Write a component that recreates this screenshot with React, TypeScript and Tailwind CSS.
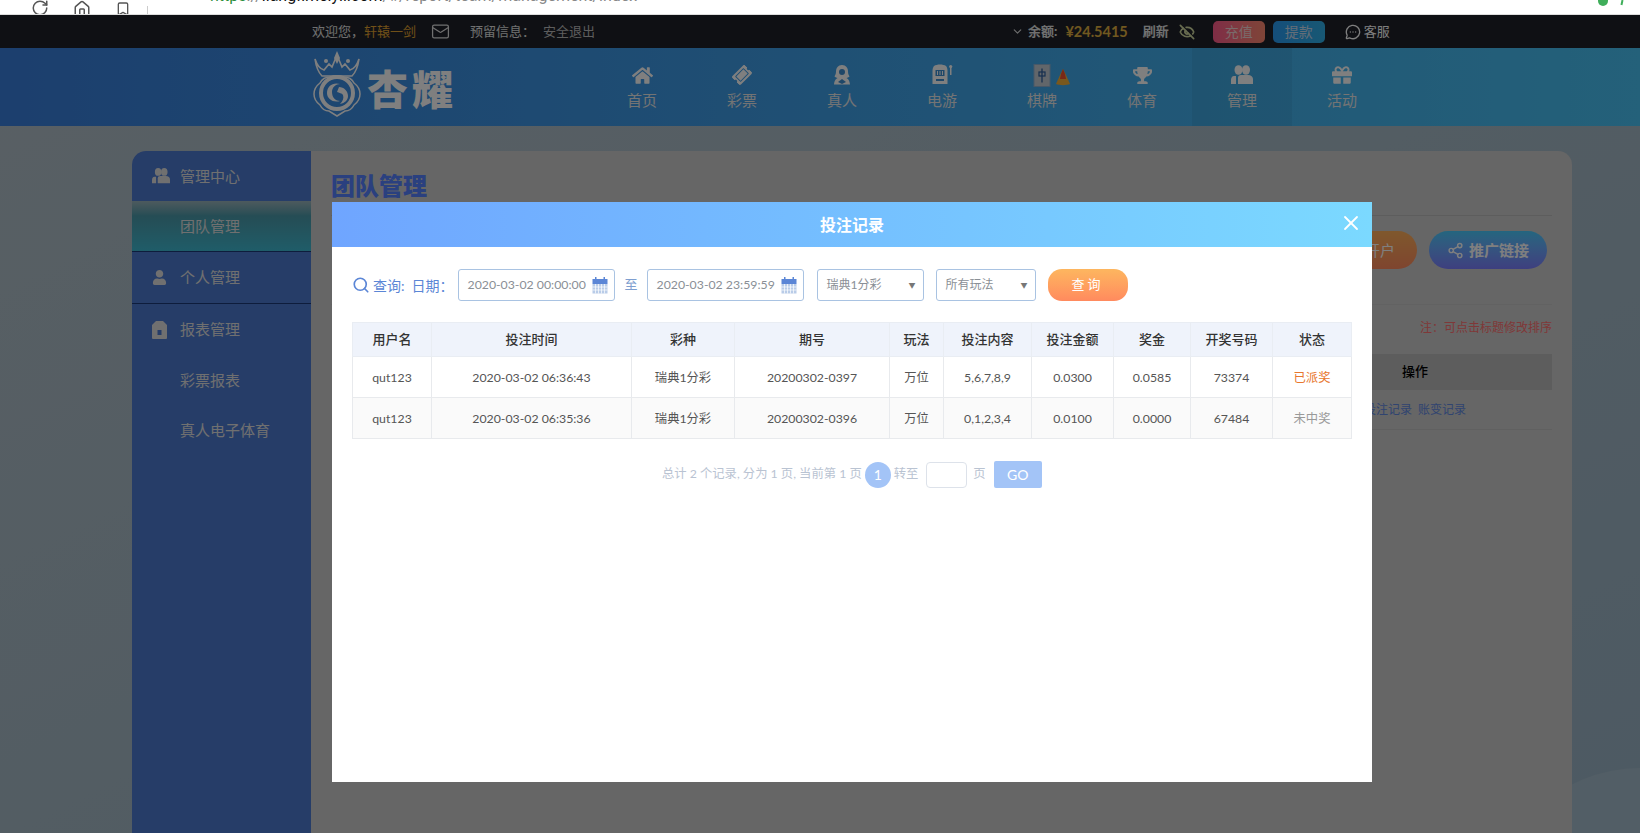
import { FaHome, FaTicketAlt, FaTrophy, FaGift, FaUser } from "react-icons/fa";
import { Mail, ChevronDown, EyeOff, MessageCircleMore, Share2, X, Search, RotateCw, House, Bookmark } from "lucide-react";

const font = "font-['Lato','Noto_Sans_CJK_SC',sans-serif]";

const rows = [
  ["qut123", "2020-03-02 06:36:43", "瑞典1分彩", "20200302-0397", "万位", "5,6,7,8,9", "0.0300", "0.0585", "73374", "已派奖"],
  ["qut123", "2020-03-02 06:35:36", "瑞典1分彩", "20200302-0396", "万位", "0,1,2,3,4", "0.0100", "0.0000", "67484", "未中奖"],
];

const heads = ["用户名", "投注时间", "彩种", "期号", "玩法", "投注内容", "投注金额", "奖金", "开奖号码", "状态"];

function PeopleIcon({ size }: { size: number }) {
  return (
    <svg width={size} height={size} viewBox="0 0 22 22" fill="currentColor">
      <ellipse cx="7.500" cy="6" rx="4" ry="4.800" />
      <ellipse cx="15" cy="6" rx="4" ry="4.800" />
      <path d="M0 20v-4c0-2 1-4 3-4h2v8z" />
      <path d="M7 20v-6c0-2 1-3 3-3h7c3 0 5 2 5 4v5z" />
    </svg>
  );
}

function LiveIcon() {
  return (
    <svg width="22" height="22" viewBox="0 0 22 22" fill="currentColor">
      <path d="M11 1c-4 0-6 3-6 6.500 0 2-.6 3.500-1.500 5 1 .8 2 1.300 3 1.500-1.500 1-3 2.200-3.500 6.500h16c-.5-4.300-2-5.500-3.500-6.500 1-.2 2-.7 3-1.500-.9-1.500-1.500-3-1.500-5C17 4 15 1 11 1z" />
      <circle cx="11" cy="8" r="3" fill="#3f8fd0" />
      <path d="M7 18l4-3 4 3-4 2z" fill="#3f8fd0" />
    </svg>
  );
}

function SlotIcon() {
  return (
    <svg width="24" height="22" viewBox="0 0 24 22" fill="currentColor">
      <path d="M4 2c3-2 9-2 12 0 1 1 1.500 3 1.500 5v13h-15V7c0-2 .5-4 1.500-5z" />
      <rect x="5.500" y="6" width="9" height="6" fill="#3f8fd0" />
      <path d="M7.500 7v4M10 7v4M12.500 7v4" stroke="currentColor" />
      <rect x="6" y="15" width="8" height="2" fill="#3f8fd0" />
      <path d="M20 3h1.500v8H20z" />
      <circle cx="20.700" cy="2.500" r="1.600" />
    </svg>
  );
}

function TileIcon() {
  return (
    <svg width="18" height="25" viewBox="0 0 18 24">
      <rect x="1" y="1" width="16" height="22" fill="#c4ccd4" stroke="#8fb0d0" />
      <path d="M9 5v14" stroke="#2d5f9e" strokeWidth="1.300" />
      <rect x="6" y="8.500" width="6" height="4" fill="none" stroke="#2d5f9e" strokeWidth="1.200" />
    </svg>
  );
}

function HotIcon() {
  return (
    <svg width="18" height="18" viewBox="0 0 18 18">
      <path d="M9 1l3 6 4 9c-3 1.500-11 1.500-14 0l4-9z" fill="#f2b03a" />
      <path d="M9 1l2 5 1 5H6l1-5z" fill="#f0502e" />
    </svg>
  );
}

function ReportIcon() {
  return (
    <svg width="15" height="18" viewBox="0 0 15 18" fill="currentColor">
      <path d="M4 0h7l4 4v13a1 1 0 0 1-1 1H1a1 1 0 0 1-1-1V4z" />
      <rect x="5.500" y="9" width="4" height="5" fill="#4c7ad0" />
    </svg>
  );
}

function CalendarIcon() {
  return (
    <svg width="16" height="17" viewBox="0 0 16 17" className="shrink-0">
      <rect x="0.500" y="2" width="15" height="5" fill="#5b86d6" />
      <rect x="3" y="0" width="1.500" height="3" fill="#5b86d6" />
      <rect x="11.500" y="0" width="1.500" height="3" fill="#5b86d6" />
      <rect x="0.500" y="7" width="15" height="9.500" fill="#b9cce8" />
      <path d="M3.500 7v9.500M6.500 7v9.500M9.500 7v9.500M12.500 7v9.500M.5 10h15M.5 13h15" stroke="#fff" strokeWidth="0.700" />
    </svg>
  );
}

function Logo() {
  return (
    <div className="flex items-center w-[280px] h-full">
      <svg width="50" height="66" viewBox="0 0 50 66" className="shrink-0 mt-[-6px] text-white">
        <path d="M3 8c2 6 5 10 9 11l5-6 3 3 5-12 5 12 3-3 5 6c4-1 7-5 9-11-1 7-3 13-7 17H10C6 21 4 15 3 8z" fill="none" stroke="currentColor" strokeWidth="1.600" />
        <path d="M25 0l3 7-3 6-3-6z" fill="currentColor" />
        <circle cx="14" cy="10" r="2" fill="currentColor" />
        <circle cx="36" cy="10" r="2" fill="currentColor" />
        <path d="M25 65l-8-5c-3 0-7-2-9-6-4-3-6-7-6-11s2-8 6-11c2-4 6-6 10-6 4-1 10-1 14 0 4 0 8 2 10 6 4 3 6 7 6 11s-2 8-6 11c-2 4-6 6-9 6z" fill="none" stroke="currentColor" strokeWidth="1.500" />
        <circle cx="25" cy="42" r="16" fill="none" stroke="currentColor" strokeWidth="4" />
        <path d="M15 42c0-7 6-11 13-9-4 0-8 3-8 8 0 6 4 9 8 9-7 2-13-2-13-8z" fill="currentColor" />
        <path d="M27 36c5 0 9 4 9 9 0 4-3 7-8 8 3-3 4-6 3-9-1-2-4-2-6-3z" fill="currentColor" />
      </svg>
      <span className="ml-[5px] text-[41px] leading-none font-black tracking-[4px] text-white font-['Noto_Sans_CJK_SC',sans-serif]">杏耀</span>
    </div>
  );
}

function NavItem({ label, active, children }: { label: string; active?: boolean; children: React.ReactNode }) {
  return (
    <div className={`relative w-[100px] h-full flex flex-col items-center pt-[14px] ${active ? "bg-black/5" : ""}`}>
      <div className="h-[26px] flex items-center justify-center text-white">{children}</div>
      <span className="mt-[2px] text-[15px] leading-5 text-[#e8e8e8]">{label}</span>
    </div>
  );
}

function SideRow({ label, icon, className }: { label: string; icon?: React.ReactNode; className: string }) {
  return (
    <div className={`flex items-center pl-[20px] text-[15px] text-[#e0e0e0] ${className}`}>
      <span className="w-[28px] flex justify-start">{icon}</span>
      {label}
    </div>
  );
}

function DateBox({ value }: { value: string }) {
  return (
    <div className="w-[157px] h-[32px] flex items-center justify-between pl-[9px] pr-[6px] border border-[#a9c3e2] rounded-[3px] text-[12.3px] text-[#8a8f96]">
      <span>{value}</span>
      <CalendarIcon />
    </div>
  );
}

function SelectBox({ value, width }: { value: string; width: string }) {
  return (
    <div className={`${width} h-[32px] flex items-center justify-between pl-[9px] pr-[7px] border border-[#a9c3e2] rounded-[3px] text-[12px] text-[#8a8f96]`}>
      <span>{value}</span>
      <span className="text-[7px] text-[#777]">▼</span>
    </div>
  );
}

function BetTable() {
  return (
    <table className="table-fixed w-[999px] border-collapse text-[12.3px] text-[#555] text-center">
      <colgroup>
        <col className="w-[79px]" />
        <col className="w-[200px]" />
        <col className="w-[103px]" />
        <col className="w-[155px]" />
        <col className="w-[54px]" />
        <col className="w-[88px]" />
        <col className="w-[82px]" />
        <col className="w-[77px]" />
        <col className="w-[82px]" />
        <col className="w-[79px]" />
      </colgroup>
      <thead>
        <tr className="h-[34px] bg-[#eff3fb]">
          {heads.map((h) => (
            <th key={h} className="border border-[#e9edf3] text-[13px] font-medium text-[#333]">{h}</th>
          ))}
        </tr>
      </thead>
      <tbody>
        {rows.map((row, i) => (
          <tr key={row[3]} className={`h-[41px] ${i === 1 ? "bg-[#fafafa]" : "bg-white"}`}>
            {row.map((cell, j) => (
              <td
                key={j}
                className={`border border-[#e8eaed] pt-[2px] ${j === 9 ? (i === 0 ? "text-[#e8762d]" : "text-[#999]") : ""}`}
              >
                {cell}
              </td>
            ))}
          </tr>
        ))}
      </tbody>
    </table>
  );
}

function BetModal() {
  return (
    <div className="absolute left-[332px] top-[187px] w-[1040px] h-[580px] bg-white">
      <div className="relative h-[45px] flex items-center justify-center bg-gradient-to-r from-[#6fa5ff] to-[#7bd9ff] text-white text-[16px] font-bold">
        投注记录
        <X className="absolute right-[9px] top-[9px]" size={24} strokeWidth={1.800} />
      </div>

      <div className="pt-[22px] pl-[20px]">
        <div className="flex items-center h-[32px] text-[14px] text-[#5b86d6]">
          <Search size={18} strokeWidth={2.200} className="mr-[3px]" />
          <span>查询:</span>
          <span className="ml-[7px] mr-[4px]">日期：</span>
          <DateBox value="2020-03-02 00:00:00" />
          <span className="ml-[10px] mr-[9px] text-[13px] text-[#7f9fd0]">至</span>
          <DateBox value="2020-03-02 23:59:59" />
          <div className="ml-[13px]"><SelectBox value="瑞典1分彩" width="w-[107px]" /></div>
          <div className="ml-[12px]"><SelectBox value="所有玩法" width="w-[100px]" /></div>
          <div className="ml-[12px] w-[80px] h-[32px] rounded-[14px] flex items-center justify-center text-white text-[13px] tracking-[3px] bg-gradient-to-b from-[#fdb65f] to-[#ff8a5e]">
            查询
          </div>
        </div>

        <div className="mt-[21px]">
          <BetTable />
        </div>

        <div className="mt-[22px] ml-[310px] flex items-center h-[27px] text-[12.3px] text-[#b9c3d2]">
          <span>总计 2 个记录, 分为 1 页, 当前第 1 页</span>
          <span className="ml-[3px] w-[26px] h-[26px] rounded-full bg-[#a3c4f7] text-white text-[14px] flex items-center justify-center">1</span>
          <span className="ml-[3px]">转至</span>
          <span className="ml-[8px] w-[41px] h-[26px] border border-[#dde2ea] rounded-[4px]" />
          <span className="ml-[6px]">页</span>
          <span className="ml-[8px] w-[48px] h-[27px] rounded-[2px] bg-[#a3c4f7] text-white text-[14px] flex items-center justify-center">GO</span>
        </div>
      </div>
    </div>
  );
}

export default function App() {
  return (
    <div className={`w-[1640px] h-[833px] overflow-hidden bg-white ${font}`}>
      {/* browser chrome, cut off at the top */}
      <div className="h-[15px] overflow-hidden relative flex items-end pl-[31px] text-[#555] border-b border-[#ddd]">
        <RotateCw size={18} className="mb-[-3px]" />
        <House size={18} className="ml-[24px] mb-[-4px]" />
        <Bookmark size={16} className="ml-[24px] mb-[-3px]" />
        <span className="ml-[16px] w-px h-[8px] bg-[#ccc]" />
        <span className="ml-[62px] h-[14px] leading-[14px] mb-[11px] text-[16px] font-['Roboto',sans-serif] whitespace-nowrap">
          <span className="text-[#2e8f3c]">https</span>
          <span className="text-[#888]">://</span>
          <span className="text-[#111]">liangfimeiyli.com</span>
          <span className="text-[#888]">/#/report/team/management/index</span>
        </span>
        <span className="absolute right-[32px] top-0 w-[10px] h-[6px] rounded-b-full bg-[#3fae5a]" />
        <span className="absolute right-[17px] top-0 w-[2px] h-[5px] rotate-12 bg-[#3fae5a]" />
      </div>

      <div className="relative h-[818px] overflow-hidden bg-gradient-to-br from-[#b2c0c8] to-[#9ab4c6]">
        {/* top bar */}
        <div className="h-[33px] flex items-center pl-[312px] bg-[#1e2028] text-[13px] text-[#e0e0e0]">
          <span>欢迎您，</span>
          <span className="text-[#e0a030]">轩辕一剑</span>
          <Mail size={19} strokeWidth={1.600} className="ml-[15px]" />
          <span className="ml-[20px]">预留信息：</span>
          <span className="ml-[8px] text-[#bbb]">安全退出</span>
          <ChevronDown size={13} className="ml-[416px]" />
          <span className="ml-[4px] font-bold">余额:</span>
          <span className="ml-[8px] font-bold text-[14.5px] text-[#e0b040]">¥24.5415</span>
          <span className="ml-[15px] font-bold">刷新</span>
          <EyeOff size={16} strokeWidth={2.500} className="ml-[10px] text-[#d0d8a0]" />
          <span className="ml-[18px] w-[52px] h-[22px] rounded-[5px] flex items-center justify-center text-[14px] bg-gradient-to-r from-[#ff5a8c] to-[#ff8a70] text-[#f4d4d4]">充值</span>
          <span className="ml-[8px] w-[52px] h-[22px] rounded-[5px] flex items-center justify-center text-[14px] bg-gradient-to-r from-[#2a9cf4] to-[#30b0e8] text-[#c8dcf0]">提款</span>
          <MessageCircleMore size={16} className="ml-[20px] text-white" />
          <span className="ml-[3px] text-white">客服</span>
        </div>

        {/* header */}
        <div className="h-[78px] flex pl-[312px] bg-gradient-to-r from-[#387edc] to-[#48c2f4]">
          <Logo />
          <NavItem label="首页"><FaHome size={21} /></NavItem>
          <NavItem label="彩票"><FaTicketAlt size={18} className="-rotate-45" /></NavItem>
          <NavItem label="真人"><LiveIcon /></NavItem>
          <NavItem label="电游"><SlotIcon /></NavItem>
          <NavItem label="棋牌">
            <TileIcon />
            <span className="absolute left-[62px] top-[20px]"><HotIcon /></span>
          </NavItem>
          <NavItem label="体育"><FaTrophy size={19} /></NavItem>
          <NavItem label="管理" active><PeopleIcon size={22} /></NavItem>
          <NavItem label="活动"><FaGift size={20} /></NavItem>
        </div>

        {/* page decoration, bottom right */}
        <div className="absolute right-[-150px] bottom-[-235px] w-[300px] h-[300px] rounded-full bg-white/10" />

        {/* page body */}
        <div className="relative ml-[132px] mr-[68px] mt-[25px] h-[700px] flex rounded-t-[14px] overflow-hidden bg-[#cccccc]">
          <div className="w-[179px] shrink-0 bg-[#4c7ad0]">
            <SideRow label="管理中心" icon={<PeopleIcon size={18} />} className="h-[50px]" />
            <SideRow
              label="团队管理"
              className="h-[51px] border-b border-[#1c3a78] bg-gradient-to-b from-[#9ab4bc] via-[#4a9aaa] via-30% to-[#3ebad2]"
            />
            <SideRow label="个人管理" icon={<FaUser size={15} />} className="h-[52px] border-b border-[#1c3a78]" />
            <SideRow label="报表管理" icon={<ReportIcon />} className="h-[51px]" />
            <SideRow label="彩票报表" className="h-[50px]" />
            <SideRow label="真人电子体育" className="h-[50px]" />
          </div>
          <div className="flex-1 px-[20px]">
            <h1 className="pt-[19px] h-[65px] text-[24px] leading-8 font-extrabold text-[#5480ff] border-b border-[#bbb]">团队管理</h1>
            <div className="mt-[15px] h-[74px] flex justify-end border-b border-[#c4c4c4]">
              <span className="w-[120px] h-[38px] rounded-[19px] flex items-center justify-end pr-[22px] text-[15px] text-white bg-gradient-to-b from-[#ffb05a] to-[#ff8a5e]">开户</span>
              <span className="ml-[12px] mr-[5px] w-[118px] h-[38px] rounded-[19px] flex items-center justify-center gap-[5px] text-[15px] font-bold text-white bg-gradient-to-b from-[#48ccff] to-[#7c7eff]">
                <Share2 size={17} />推广链接
              </span>
            </div>
            <div className="mt-[13px] text-right text-[12px] leading-5 text-[#ff7070]">注：可点击标题修改排序</div>
            <div className="mt-[16px] ml-auto w-[400px] text-center">
              <div className="h-[36px] flex items-center justify-center pl-[126px] bg-[#bababa] text-[13px] font-medium text-black">操作</div>
              <div className="h-[40px] flex items-center justify-center pl-[126px] border-b border-[#c0c0c0] text-[12px] text-[#6088e0]">投注记录&nbsp;&nbsp;账变记录</div>
            </div>
          </div>
        </div>

        {/* dialog */}
        <div className="absolute inset-0 bg-black/50" />
        <BetModal />
      </div>
    </div>
  );
}
